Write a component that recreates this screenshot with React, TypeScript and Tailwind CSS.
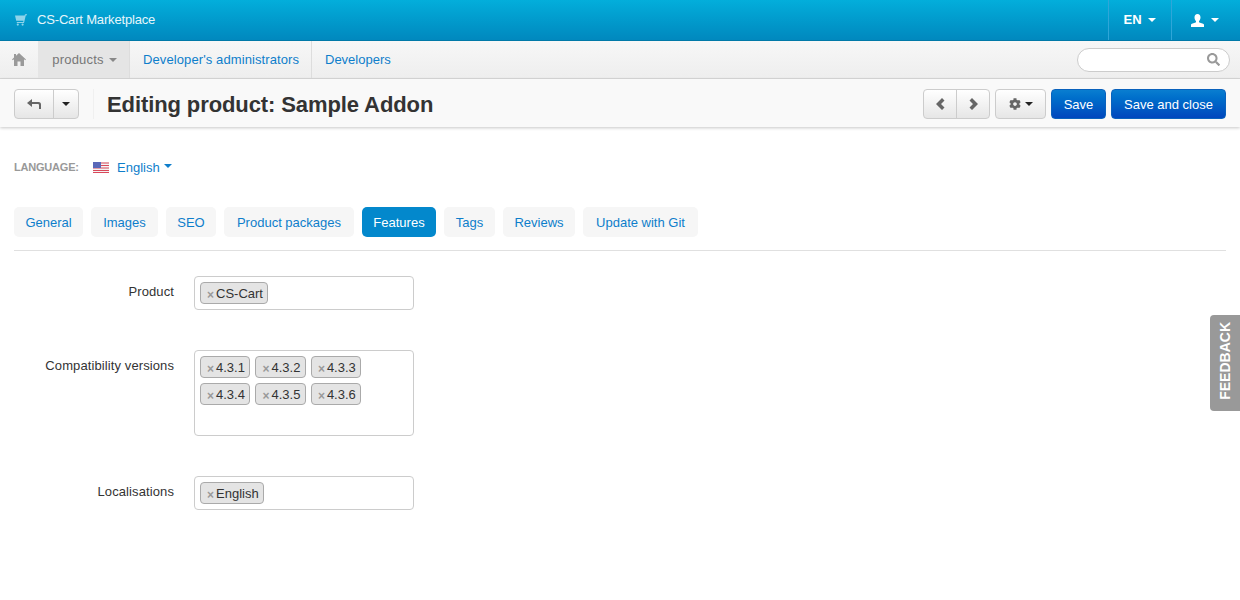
import { FaSearch, FaCog } from "react-icons/fa";

const tabs = [
  { label: "General", width: "w-[69px]" },
  { label: "Images", width: "w-[67px]" },
  { label: "SEO", width: "w-[50px]" },
  { label: "Product packages", width: "w-[130px]" },
  { label: "Features", width: "w-[74px]" },
  { label: "Tags", width: "w-[51px]" },
  { label: "Reviews", width: "w-[72px]" },
  { label: "Update with Git", width: "w-[115px]" },
];

function Caret({ className }: { className: string }) {
  return <span className={`inline-block w-0 h-0 border-x-[4px] border-x-transparent border-t-[4px] ${className}`} />;
}

function Tag({ label }: { label: string }) {
  return (
    <span className="h-[22px] pt-[1px] flex items-center pl-[6px] pr-[4.5px] bg-[#e4e4e4] border border-[#aaaaaa] rounded-[4px] text-[13px] text-[#333333]">
      <span className="text-[#999999] text-[12px] font-bold leading-none mr-[2px] mt-[2px]">×</span>
      {label}
    </span>
  );
}

function Field({ label, tags, boxClass, rowClass }: { label: string; tags: string[]; boxClass: string; rowClass: string }) {
  return (
    <div className={`flex ${rowClass}`}>
      <div className="w-[160px] text-right text-[13px] tracking-[0.1px] text-[#333333] pt-[7px] leading-[18px]">{label}</div>
      <div className={`ml-[20px] w-[220px] border border-[#cccccc] rounded-[4px] bg-white pl-[5px] pt-[5px] flex flex-wrap gap-[5px] content-start ${boxClass}`}>
        {tags.map((t) => (
          <Tag key={t} label={t} />
        ))}
      </div>
    </div>
  );
}

export default function App() {
  return (
    <div className="w-[1240px] h-[600px] overflow-hidden relative bg-white font-['Liberation_Sans',Arial,sans-serif]">
      {/* Top bar */}
      <div className="h-[41px] flex items-center justify-between bg-gradient-to-b from-[#03aedb] to-[#0188be] border-b border-[#0179a8]">
        <div className="flex items-center pl-[15px] text-[13px]">
          <svg width="12" height="12" viewBox="0 0 12 12" className="mr-[10px] text-[#8fd4ea]" fill="currentColor">
            <path d="M0 1.500h9.600L10 .3h2v1h-1.200L9 9H1.800v-1h6.400l.2-1.200H1.200z" />
            <circle cx="2.800" cy="10.600" r="1.100" />
            <circle cx="7.600" cy="10.600" r="1.100" />
          </svg>
          <span className="text-[#e6f6fb] tracking-[-0.17px]">CS-Cart Marketplace</span>
        </div>
        <div className="flex h-full">
          <div className="w-[63px] pr-[1px] flex items-center justify-center gap-[6px] border-l border-[#2fa6d8] text-white text-[13px] font-bold">
            EN <Caret className="border-t-white" />
          </div>
          <div className="w-[69px] flex items-center justify-center gap-[7px] border-l border-[#2fa6d8] text-white pr-[2px]">
            <svg width="13" height="13" viewBox="0 0 13 13" fill="currentColor">
              <path d="M6.500 0C8.400 0 9.500 1.400 9.500 3.400c0 1.500-.7 2.800-1.500 3.600v1.200c.8.5 4.500 1.200 5 2.400V13H0v-2.400c.5-1.200 4.200-1.900 5-2.400V7C4.200 6.200 3.500 4.900 3.500 3.400 3.500 1.400 4.600 0 6.500 0z" />
            </svg>
            <Caret className="border-t-white" />
          </div>
        </div>
      </div>

      {/* Nav */}
      <div className="h-[38px] flex items-stretch justify-between bg-gradient-to-b from-[#f7f7f7] to-[#eeeeee] border-b border-[#d9d9d9] text-[13px]">
        <div className="flex">
          <div className="w-[38px] flex items-center justify-center">
            <svg width="14" height="13" viewBox="0 0 14 13" fill="#9a9a9a">
              <path d="M7 0 14 6.500l-.8.8L12 6.200V13H8.500V8.500h-3V13H2V6.200L.8 7.300 0 6.500l2-1.900V1h2v1.700z" />
            </svg>
          </div>
          <div className="w-[92px] pl-[2px] flex items-center justify-center gap-[5px] bg-[#e5e5e5] text-[#777777] border-r border-[#dddddd] tracking-[0.2px]">
            products <Caret className="border-t-[#888888]" />
          </div>
          <div className="w-[182px] pl-[13px] flex items-center text-[#0e7ecb] border-r border-[#dddddd] tracking-[0.1px]">Developer's administrators</div>
          <div className="pl-[13px] flex items-center text-[#0e7ecb]">Developers</div>
        </div>
        <div className="flex items-center pr-[10px]">
          <div className="w-[153px] h-[24px] bg-white border border-[#cccccc] rounded-full flex items-center justify-end pr-[9px]">
            <FaSearch className="w-[13px] h-[13px] text-[#999999]" />
          </div>
        </div>
      </div>

      {/* Toolbar */}
      <div className="h-[48px] pt-[2px] flex items-center justify-between px-[14px] bg-[#f9f9f9] shadow-[0_1px_3px_rgba(0,0,0,0.22)]">
        <div className="flex items-center">
          <div className="flex h-[30px] w-[65px] border border-[#cccccc] rounded-[4px] bg-gradient-to-b from-white to-[#e6e6e6]">
            <div className="w-[39px] flex items-center justify-center border-r border-[#cccccc]">
              <svg width="14" height="10" viewBox="0 0 14 10" fill="#666666">
                <path d="M5 0v3h6.500Q14 3 14 5.500V10h-2V6.200Q12 5 11 5H5v3L0 4z" />
              </svg>
            </div>
            <div className="flex-1 flex items-center justify-center">
              <Caret className="border-t-[#222222]" />
            </div>
          </div>
          <div className="ml-[14px] w-px h-[30px] bg-[#f0f0f0]" />
          <h1 className="ml-[13px] mt-[1px] text-[22px] font-bold text-[#333333] leading-none tracking-[-0.1px]">Editing product: Sample Addon</h1>
        </div>
        <div className="flex items-center">
          <div className="flex h-[30px] w-[67px] border border-[#cccccc] rounded-[4px] bg-gradient-to-b from-white to-[#e6e6e6]">
            <div className="flex-1 flex items-center justify-center border-r border-[#cccccc]">
              <svg width="9" height="12" viewBox="0 0 9 12" fill="#666666">
                <path d="M6 0l2.500 2.500L5 6l3.500 3.500L6 12 0 6z" />
              </svg>
            </div>
            <div className="flex-1 flex items-center justify-center">
              <svg width="9" height="12" viewBox="0 0 9 12" fill="#666666">
                <path d="M3 0 .5 2.500 4 6 .5 9.500 3 12l6-6z" />
              </svg>
            </div>
          </div>
          <div className="ml-[5px] w-[51px] h-[30px] flex items-center justify-center gap-[4px] border border-[#cccccc] rounded-[4px] bg-gradient-to-b from-white to-[#e6e6e6]">
            <FaCog className="w-[12px] h-[12px] text-[#666666]" />
            <Caret className="border-t-[#222222]" />
          </div>
          <button className="ml-[5px] w-[55px] h-[30px] pt-[1px] rounded-[4px] text-white text-[13px] bg-gradient-to-b from-[#0a7ed0] to-[#0046bd] border border-[#0a62bd]">Save</button>
          <button className="ml-[5px] w-[115px] h-[30px] pt-[1px] rounded-[4px] text-white text-[13px] bg-gradient-to-b from-[#0a7ed0] to-[#0046bd] border border-[#0a62bd]">Save and close</button>
        </div>
      </div>

      {/* Language */}
      <div className="mt-[31px] ml-[14px] h-[18px] flex items-center">
        <span className="text-[11px] font-bold text-[#999999] w-[79px] tracking-[-0.2px]">LANGUAGE:</span>
        <svg width="16" height="11" viewBox="0 0 16 11" className="mr-[8px]">
          <rect width="16" height="11" fill="#f3f3f3" />
          <path d="M0 1h16M0 3.500h16M0 6h16M0 8.500h16M0 10.500h16" stroke="#d9485a" strokeWidth="1" />
          <rect width="8" height="6" fill="#5a68b8" />
        </svg>
        <span className="text-[13px] text-[#0e7ecb] leading-none mt-[1px]">English</span>
        <Caret className="border-t-[#0e7ecb] ml-[4px] mb-[3px]" />
      </div>

      {/* Tabs */}
      <div className="mt-[31px] mx-[14px] h-[44px] flex gap-[8px] items-start border-b border-[#e0e0e0]">
        {tabs.map((t) => (
          <div
            key={t.label}
            className={`h-[30px] pt-[1px] ${t.width} flex items-center justify-center rounded-[5px] text-[13px] ${
              t.label === "Features" ? "bg-[#0388cc] text-white" : "bg-[#f6f6f6] text-[#0e7ecb]"
            }`}
          >
            {t.label}
          </div>
        ))}
      </div>

      {/* Form */}
      <div className="mt-[25px] ml-[14px]">
        <Field label="Product" tags={["CS-Cart"]} boxClass="h-[34px]" rowClass="mb-[40px]" />
        <Field
          label="Compatibility versions"
          tags={["4.3.1", "4.3.2", "4.3.3", "4.3.4", "4.3.5", "4.3.6"]}
          boxClass="h-[86px]"
          rowClass="mb-[40px]"
        />
        <Field label="Localisations" tags={["English"]} boxClass="h-[34px]" rowClass="" />
      </div>

      {/* Feedback */}
      <div className="absolute left-[1210px] top-[315px] w-[30px] h-[96px] pb-[4px] bg-[#999999] rounded-l-[4px] flex items-center justify-center">
        <span className="text-white font-bold text-[14px] [writing-mode:vertical-rl] rotate-180">FEEDBACK</span>
      </div>
    </div>
  );
}
